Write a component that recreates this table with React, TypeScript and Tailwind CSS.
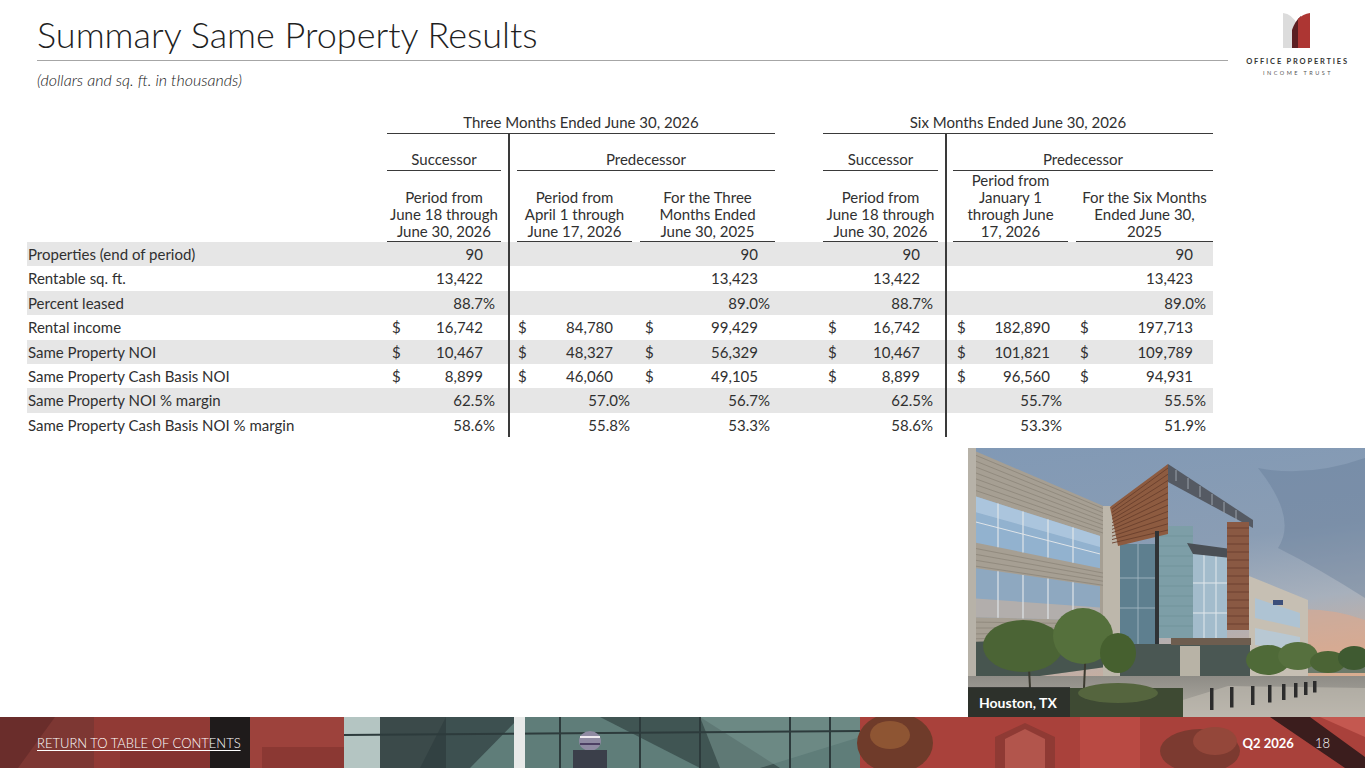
import React from "react";

type Kind = "count" | "pct" | "usd";

interface Row {
  label: string;
  kind: Kind;
  vals: string[];
}

const ROWS: Row[] = [
  { label: "Properties (end of period)", kind: "count", vals: ["90", "", "90", "90", "", "90"] },
  { label: "Rentable sq. ft.", kind: "count", vals: ["13,422", "", "13,423", "13,422", "", "13,423"] },
  { label: "Percent leased", kind: "pct", vals: ["88.7%", "", "89.0%", "88.7%", "", "89.0%"] },
  { label: "Rental income", kind: "usd", vals: ["16,742", "84,780", "99,429", "16,742", "182,890", "197,713"] },
  { label: "Same Property NOI", kind: "usd", vals: ["10,467", "48,327", "56,329", "10,467", "101,821", "109,789"] },
  { label: "Same Property Cash Basis NOI", kind: "usd", vals: ["8,899", "46,060", "49,105", "8,899", "96,560", "94,931"] },
  { label: "Same Property NOI % margin", kind: "pct", vals: ["62.5%", "57.0%", "56.7%", "62.5%", "55.7%", "55.5%"] },
  { label: "Same Property Cash Basis NOI % margin", kind: "pct", vals: ["58.6%", "55.8%", "53.3%", "58.6%", "53.3%", "51.9%"] },
];

const GRID = "grid grid-cols-[360px_121px_127px_140px_48px_122px_127px_141px]";

// per-column paddings so $ signs, numbers and percents land where the reference has them
const COLS = [
  { line: false, usd: "pl-[5px]", num: "pr-[25px]", pct: "pr-[13px]" },
  { line: true, usd: "pl-[8px]", num: "pr-[22px]", pct: "pr-[5px]" },
  { line: false, usd: "pl-[10px]", num: "pr-[17px]", pct: "pr-[5px]" },
  { line: false, usd: "pl-[5px]", num: "pr-[25px]", pct: "pr-[12px]" },
  { line: true, usd: "pl-[10px]", num: "pr-[22px]", pct: "pr-[10px]" },
  { line: false, usd: "pl-[8px]", num: "pr-[20px]", pct: "pr-[7px]" },
];

const SUB_HEADERS: { lines: string[]; wrap: string }[] = [
  { lines: ["Period from", "June 18 through", "June 30, 2026"], wrap: "mr-[7px]" },
  { lines: ["Period from", "April 1 through", "June 17, 2026"], wrap: "ml-[7px] mr-[3px]" },
  { lines: ["For the Three", "Months Ended", "June 30, 2025"], wrap: "ml-[5px]" },
  { lines: ["Period from", "June 18 through", "June 30, 2026"], wrap: "mr-[7px]" },
  { lines: ["Period from", "January 1", "through June", "17, 2026"], wrap: "ml-[6px] mr-[4px]" },
  { lines: ["For the Six Months", "Ended June 30,", "2025"], wrap: "ml-[4px]" },
];

function Cell({ col, kind, value }: { col: number; kind: Kind; value: string }) {
  const c = COLS[col];
  const base = `flex items-center h-full ${c.line ? "border-l-2 border-[#3a3a3a]" : ""}`;
  if (!value) return <div className={base} />;
  if (kind === "usd") {
    return (
      <div className={`${base} justify-between ${c.usd} ${c.num}`}>
        <span>$</span>
        <span>{value}</span>
      </div>
    );
  }
  return <div className={`${base} justify-end ${kind === "pct" ? c.pct : c.num}`}>{value}</div>;
}

function SubHeader({ col }: { col: number }) {
  const h = SUB_HEADERS[col];
  return (
    <div className={`flex items-end h-full ${COLS[col].line ? "border-l-2 border-[#3a3a3a]" : ""}`}>
      <div className={`flex-1 flex flex-col items-center border-b-[1.5px] border-[#3a3a3a] pb-[1px] ${h.wrap}`}>
        {h.lines.map((l, i) => (
          <span key={i} className="leading-[17px] whitespace-nowrap">
            {l}
          </span>
        ))}
      </div>
    </div>
  );
}

function SummaryTable() {
  return (
    <div className="ml-[27px] w-[1186px] text-[15px] text-[#303030]">
      {/* period headings */}
      <div className={`${GRID} h-[21px]`}>
        <div />
        <div className="col-span-3 flex items-center justify-center border-b-[1.5px] border-[#3a3a3a] leading-none pb-[1px]">
          Three Months Ended June 30, 2026
        </div>
        <div />
        <div className="col-span-3 flex items-center justify-center border-b-[1.5px] border-[#3a3a3a] leading-none pb-[1px]">
          Six Months Ended June 30, 2026
        </div>
      </div>

      {/* successor / predecessor */}
      <div className={`${GRID} h-[37px]`}>
        <div />
        <div className="flex items-end">
          <div className="flex-1 text-center border-b-[1.5px] border-[#3a3a3a] mr-[7px] pb-[2px] leading-[17px]">Successor</div>
        </div>
        <div className="col-span-2 flex items-end border-l-2 border-[#3a3a3a]">
          <div className="flex-1 text-center border-b-[1.5px] border-[#3a3a3a] ml-[7px] pb-[2px] leading-[17px]">Predecessor</div>
        </div>
        <div />
        <div className="flex items-end">
          <div className="flex-1 text-center border-b-[1.5px] border-[#3a3a3a] mr-[7px] pb-[2px] leading-[17px]">Successor</div>
        </div>
        <div className="col-span-2 flex items-end border-l-2 border-[#3a3a3a]">
          <div className="flex-1 text-center border-b-[1.5px] border-[#3a3a3a] ml-[6px] pb-[2px] leading-[17px]">Predecessor</div>
        </div>
      </div>

      {/* period descriptions */}
      <div className={`${GRID} h-[71px]`}>
        <div />
        <SubHeader col={0} />
        <SubHeader col={1} />
        <SubHeader col={2} />
        <div />
        <SubHeader col={3} />
        <SubHeader col={4} />
        <SubHeader col={5} />
      </div>

      {/* data rows */}
      {ROWS.map((r, i) => (
        <div key={r.label} className={`${GRID} h-[24.4px] ${i % 2 === 0 ? "bg-[#e6e6e6]" : ""}`}>
          <div className="flex items-center pl-[1px] whitespace-nowrap">{r.label}</div>
          <Cell col={0} kind={r.kind} value={r.vals[0]} />
          <Cell col={1} kind={r.kind} value={r.vals[1]} />
          <Cell col={2} kind={r.kind} value={r.vals[2]} />
          <div />
          <Cell col={3} kind={r.kind} value={r.vals[3]} />
          <Cell col={4} kind={r.kind} value={r.vals[4]} />
          <Cell col={5} kind={r.kind} value={r.vals[5]} />
        </div>
      ))}
    </div>
  );
}

function Logo() {
  return (
    <div className="flex flex-col items-center pt-[13px]">
      <svg width="27" height="35" viewBox="0 0 27 35">
        <path d="M0 0 Q9 1 14 11 L14 35 L0 35 Z" fill="#dcdcdc" />
        <path d="M9 17 Q12 8 18 3 L18 35 L9 35 Z" fill="#5b1f22" />
        <path d="M15 6 Q20 1 27 0 L27 35 L15 35 Z" fill="#ad3633" />
      </svg>
      <div className="mt-[10px] text-[7.5px] font-bold tracking-[0.24em] text-[#333] leading-none whitespace-nowrap pl-[2px]">
        OFFICE PROPERTIES
      </div>
      <div className="mt-[5px] text-[5.5px] tracking-[0.45em] text-[#555] leading-none whitespace-nowrap pl-[3px]">
        INCOME TRUST
      </div>
    </div>
  );
}

function HoustonPhoto() {
  // simple one-point perspective for the left wing
  const py = (y0: number, x: number) => y0 + ((180 - y0) * x) / 420;
  const quad = (top: number, bot: number, x1: number, x2: number) =>
    `${x1},${py(top, x1)} ${x2},${py(top, x2)} ${x2},${py(bot, x2)} ${x1},${py(bot, x1)}`;
  const bands = [4, 10, 16, 22, 28, 34, 40, 99, 105, 111, 117, 174, 180, 186, 191];
  const mullions = [30, 55, 80, 105];
  const bollards = [242, 262, 283, 300, 314, 326, 336, 345];

  return (
    <svg width="397" height="269" viewBox="0 0 397 269" className="block">
      <defs>
        <linearGradient id="sky" x1="0" y1="0" x2="0.2" y2="1">
          <stop offset="0" stopColor="#8199b5" />
          <stop offset="0.45" stopColor="#8a9db4" />
          <stop offset="0.7" stopColor="#a7b0bc" />
          <stop offset="1" stopColor="#d9ad90" />
        </linearGradient>
        <linearGradient id="ground" x1="0" y1="0" x2="0" y2="1">
          <stop offset="0" stopColor="#8e8c86" />
          <stop offset="1" stopColor="#b3afa6" />
        </linearGradient>
      </defs>
      <rect width="397" height="269" fill="url(#sky)" />
      <path d="M290 20 Q340 30 397 10 L397 150 Q350 120 310 100 Q330 70 290 20 Z" fill="#5f7591" opacity="0.35" />
      <path d="M300 165 Q350 155 397 172 L397 215 L300 215 Z" fill="#e2a888" opacity="0.55" />

      {/* left wing */}
      <polygon points={`0,0 140,${py(0, 140)} 140,${py(238, 140)} 0,238`} fill="#a69f93" />
      {bands.map((b) => (
        <line key={b} x1="8" y1={py(b, 8)} x2="140" y2={py(b, 140)} stroke="#857e72" strokeWidth="1" opacity="0.6" />
      ))}
      <polygon points={quad(46, 93, 8, 132)} fill="#92b2cf" />
      <polygon points={quad(46, 62, 8, 132)} fill="#b7cde2" opacity="0.7" />
      <polygon points={quad(119, 169, 8, 132)} fill="#8ea8c0" />
      <polygon points={quad(150, 169, 8, 132)} fill="#c9b29f" opacity="0.6" />
      {mullions.map((m) => (
        <g key={m}>
          <line x1={m} y1={py(46, m)} x2={m} y2={py(93, m)} stroke="#dfe4e8" strokeWidth="1.2" />
          <line x1={m} y1={py(119, m)} x2={m} y2={py(169, m)} stroke="#dfe4e8" strokeWidth="1.2" />
        </g>
      ))}
      <line x1="8" y1={py(72, 8)} x2="132" y2={py(72, 132)} stroke="#dfe4e8" strokeWidth="1" />
      <polygon points={quad(194, 238, 8, 136)} fill="#47554f" />
      <rect x="0" y="0" width="8" height="240" fill="#b7b2a8" />
      <rect x="135" y="58" width="17" height="178" fill="#bdb7ab" />

      {/* center tower */}
      <rect x="152" y="96" width="37" height="100" fill="#5e7f8f" />
      <line x1="170" y1="96" x2="170" y2="196" stroke="#a9bcc6" strokeWidth="0.8" />
      <line x1="152" y1="130" x2="189" y2="130" stroke="#a9bcc6" strokeWidth="0.8" />
      <line x1="152" y1="160" x2="189" y2="160" stroke="#a9bcc6" strokeWidth="0.8" />
      <rect x="189" y="78" width="36" height="112" fill="#7d9ea7" />
      {[88, 98, 108, 118, 128, 138, 148, 158, 168, 178].map((y) => (
        <line key={y} x1="189" y1={y} x2="225" y2={y} stroke="#6d8d96" strokeWidth="0.6" />
      ))}
      <rect x="225" y="104" width="34" height="88" fill="#a3bccc" />
      <line x1="236" y1="104" x2="236" y2="192" stroke="#e2e8ec" strokeWidth="1" />
      <line x1="248" y1="104" x2="248" y2="192" stroke="#e2e8ec" strokeWidth="1" />
      <line x1="225" y1="135" x2="259" y2="135" stroke="#e2e8ec" strokeWidth="1" />
      <line x1="225" y1="165" x2="259" y2="165" stroke="#e2e8ec" strokeWidth="1" />
      <polygon points="219,95 263,101 263,110 225,106" fill="#4a4f55" />
      <polygon points="142,59 200,16 200,86 150,98" fill="#8d5b40" />
      {[0, 1, 2, 3, 4, 5, 6, 7, 8, 9, 10].map((k) => (
        <line key={k} x1="144" y1={61 + k * 3.4} x2="200" y2={20 + k * 6.2} stroke="#6a402c" strokeWidth="0.9" />
      ))}
      <polygon points="200,16 285,72 285,80 200,34" fill="#555a63" />
      {[0, 1, 2, 3, 4, 5].map((k) => (
        <line key={k} x1={208 + k * 12} y1={22 + k * 8} x2={208 + k * 12} y2={33 + k * 8} stroke="#9aa1ab" strokeWidth="1" />
      ))}
      <rect x="259" y="74" width="22" height="108" fill="#8a5943" />
      {[80, 88, 96, 104, 112, 120, 128, 136, 144, 152, 160, 168, 176].map((y) => (
        <line key={y} x1="259" y1={y} x2="281" y2={y} stroke="#6c4130" strokeWidth="1" />
      ))}
      <rect x="187" y="83" width="4" height="160" fill="#2f3336" />

      {/* right building */}
      <polygon points="281,128 340,152 340,228 281,228" fill="#c6bfb3" />
      <polygon points="287,150 332,165 332,180 287,170" fill="#aec3d3" />
      <polygon points="287,180 332,189 332,202 287,197" fill="#b8c8d3" />
      <rect x="305" y="152" width="10" height="5" fill="#3c4f7a" />

      {/* entrance */}
      <rect x="152" y="196" width="130" height="40" fill="#4a5753" />
      <rect x="203" y="190" width="80" height="7" fill="#6d5d4f" />
      <rect x="212" y="198" width="20" height="38" fill="#d3cbbc" opacity="0.8" />
      <rect x="340" y="205" width="57" height="20" fill="#6c7a6a" />

      {/* ground */}
      <rect x="0" y="228" width="397" height="41" fill="url(#ground)" />
      <polygon points="160,269 260,238 397,240 397,269" fill="#c2bdb3" opacity="0.6" />

      {/* trees */}
      <line x1="60" y1="200" x2="62" y2="240" stroke="#3b3a30" strokeWidth="2" />
      <line x1="118" y1="195" x2="116" y2="240" stroke="#3b3a30" strokeWidth="2" />
      <ellipse cx="55" cy="198" rx="40" ry="26" fill="#4b6435" />
      <ellipse cx="115" cy="188" rx="30" ry="28" fill="#55703c" />
      <ellipse cx="150" cy="205" rx="18" ry="20" fill="#46602f" />
      <ellipse cx="300" cy="212" rx="22" ry="15" fill="#4f6a38" />
      <ellipse cx="330" cy="208" rx="20" ry="14" fill="#56703e" />
      <ellipse cx="360" cy="214" rx="18" ry="11" fill="#4b6435" />
      <ellipse cx="386" cy="210" rx="16" ry="12" fill="#3f5a31" />
      <rect x="0" y="240" width="215" height="29" fill="#3e4a33" />
      <ellipse cx="150" cy="245" rx="40" ry="10" fill="#55653e" />

      {bollards.map((x, i) => (
        <rect key={x} x={x} y={240 - i} width="3.5" height={22 - i * 1.5} fill="#2c2c2c" />
      ))}
    </svg>
  );
}

function FooterArt() {
  return (
    <svg width="1365" height="51" viewBox="0 0 1365 51" className="absolute inset-0">
      <rect width="1365" height="51" fill="#a6403a" />
      {/* left red facade */}
      <rect x="0" y="0" width="94" height="51" fill="#7d3733" />
      <polygon points="0,0 55,0 18,51 0,51" fill="#6a2d2b" />
      <rect x="94" y="0" width="116" height="51" fill="#913a35" />
      <rect x="120" y="26" width="90" height="25" fill="#843330" />
      <rect x="210" y="0" width="40" height="51" fill="#1f1b1b" />
      <rect x="250" y="0" width="94" height="51" fill="#9d423c" />
      <rect x="262" y="30" width="82" height="21" fill="#8b3833" />
      {/* glass */}
      <rect x="344" y="0" width="516" height="51" fill="#5f7d79" />
      <rect x="344" y="0" width="36" height="51" fill="#b4c5c2" />
      <rect x="380" y="0" width="66" height="51" fill="#3b4a4a" />
      <polygon points="446,0 520,0 470,51 420,51" fill="#2f3d3e" opacity="0.7" />
      <polygon points="600,0 700,0 780,51 700,51" fill="#2c3a3b" opacity="0.6" />
      <polygon points="700,0 860,0 860,20 760,51 720,51" fill="#74918c" opacity="0.6" />
      {[560, 640, 700, 790, 830].map((x) => (
        <line key={x} x1={x} y1="0" x2={x} y2="51" stroke="#2d3b3c" strokeWidth="2" />
      ))}
      <line x1="344" y1="18" x2="860" y2="14" stroke="#2d3b3c" strokeWidth="2" />
      <rect x="514" y="0" width="11" height="51" fill="#e7e9e8" />
      <ellipse cx="590" cy="24" rx="11" ry="10" fill="#8f8aa2" />
      <line x1="580" y1="20" x2="600" y2="20" stroke="#efeaf0" strokeWidth="2" />
      <line x1="580" y1="27" x2="600" y2="27" stroke="#4c3f63" strokeWidth="2" />
      <rect x="573" y="33" width="34" height="18" fill="#3b3f4a" />
      {/* right red building and tree */}
      <rect x="860" y="0" width="505" height="51" fill="#a9413b" />
      <ellipse cx="895" cy="26" rx="38" ry="30" fill="#6f3b2a" />
      <ellipse cx="890" cy="18" rx="20" ry="14" fill="#8e5533" />
      <polygon points="995,20 1025,6 1055,20 1055,51 995,51" fill="#8f3a34" />
      <polygon points="1005,22 1025,12 1045,22 1045,51 1005,51" fill="#b2554c" />
      <rect x="1080" y="0" width="60" height="51" fill="#b94a43" />
      <ellipse cx="1200" cy="34" rx="40" ry="22" fill="#7c3a30" />
      <ellipse cx="1215" cy="24" rx="22" ry="14" fill="#94473a" />
      <polygon points="1270,0 1310,0 1365,40 1365,51 1345,51" fill="#3b1d1d" />
      <polygon points="1320,0 1365,0 1365,20" fill="#c45850" />
    </svg>
  );
}

export default function App() {
  return (
    <div className="w-[1365px] h-[768px] overflow-hidden bg-white flex flex-col font-['Lato',sans-serif] text-[#262626]">
      {/* title bar */}
      <div className="flex h-[61px]">
        <div className="w-[1191px] ml-[37px] border-b border-[#a6a6a6]">
          <h1 className="text-[36px] font-light leading-none pt-[16px] text-[#1f1f1f]">
            Summary Same Property Results
          </h1>
        </div>
        <div className="flex-1">
          <Logo />
        </div>
      </div>
      <p className="ml-[37px] mt-[10px] text-[16px] font-light italic leading-[18px] text-[#1a1a1a]">
        (dollars and sq. ft. in thousands)
      </p>

      <div className="mt-[24px]">
        <SummaryTable />
      </div>

      {/* photo */}
      <div className="flex-1 flex justify-end items-end">
        <div className="relative w-[397px] h-[269px]">
          <HoustonPhoto />
          <div className="absolute left-0 bottom-0 w-[102px] h-[30px] bg-[#2a2d2a]/85 flex items-center pl-[11px] text-white text-[14px] font-bold">
            Houston, TX
          </div>
        </div>
      </div>

      {/* footer band */}
      <div className="relative h-[51px] shrink-0">
        <FooterArt />
        <div className="relative h-full flex items-center pl-[37px] pr-[35px] pt-[2px] text-white">
          <span className="text-[13px] font-light underline underline-offset-2">RETURN TO TABLE OF CONTENTS</span>
          <span className="ml-auto text-[13px] font-bold">Q2 2026</span>
          <span className="ml-[21px] text-[13px] font-light">18</span>
        </div>
      </div>
    </div>
  );
}
